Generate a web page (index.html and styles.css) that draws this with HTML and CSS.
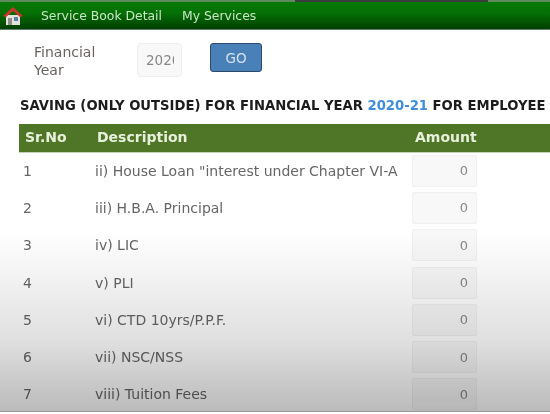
FILE: index.html
```html
<!DOCTYPE html>
<html>
  <head>
    <meta name="viewport" content="width=device-width, initial-scale=1" />
    <title>Saving (Only Outside)</title>
    <link rel="stylesheet" href="styles.css">
  </head>

  <body>
    <div class="top-strip"><div class="top-strip-dark"></div></div>
    <div class="nav">
      <a class="nav-home" href="#">
        <svg width="22" height="20" viewBox="0 0 22 20">
          <rect x="4" y="9" width="14" height="10" fill="#e4e2dc" />
          <rect x="12" y="11" width="4" height="4" fill="#5a7fa8" />
          <rect x="6" y="12" width="4" height="7" fill="#8f8f88" />
          <path d="M1 10 L11 1 L21 10 L18 11 L11 5 L4 11 Z" fill="#c9372c" />
        </svg>
      </a>
      <a class="nav-link" href="#">Service Book Detail</a>
      <a class="nav-link" href="#">My Services</a>
    </div>

    <div class="filter">
      <label class="filter-label">Financial Year</label>
      <input class="filter-input" type="text" value="2020-21" readonly />
      <button class="go-button">GO</button>
    </div>

    <h4 class="title">SAVING (ONLY OUTSIDE) FOR FINANCIAL YEAR <span class="year">2020-21</span> FOR EMPLOYEE</h4>

    <table class="saving-table">
      <thead>
        <tr>
          <th class="col-no">Sr.No</th>
          <th class="col-desc">Description</th>
          <th class="col-amount">Amount</th>
          <th></th>
        </tr>
      </thead>
      <tbody>
        <tr><td>1</td><td>ii) House Loan "interest under Chapter VI-A</td><td><input class="amount" value="0" readonly /></td><td></td></tr>
        <tr><td>2</td><td>iii) H.B.A. Principal</td><td><input class="amount" value="0" readonly /></td><td></td></tr>
        <tr><td>3</td><td>iv) LIC</td><td><input class="amount" value="0" readonly /></td><td></td></tr>
        <tr><td>4</td><td>v) PLI</td><td><input class="amount" value="0" readonly /></td><td></td></tr>
        <tr><td>5</td><td>vi) CTD 10yrs/P.P.F.</td><td><input class="amount" value="0" readonly /></td><td></td></tr>
        <tr><td>6</td><td>vii) NSC/NSS</td><td><input class="amount" value="0" readonly /></td><td></td></tr>
        <tr><td>7</td><td>viii) Tuition Fees</td><td><input class="amount" value="0" readonly /></td><td></td></tr>
      </tbody>
    </table>

    <!-- Grey fade over the bottom of the page -->
    <div class="fade"></div>
  </body>
</html>
```

FILE: styles.css
```css
* {
  box-sizing: border-box;
}

html,
body {
  height: 414px;
  overflow: hidden;
}

body {
  margin: 0;
  background-color: white;
  font-family: "DejaVu Sans", sans-serif;
  font-size: 14px;
  color: #555;
}

.top-strip {
  height: 2px;
  background-color: #5f8a5f;
  padding-left: 295px;
}

.top-strip-dark {
  width: 193px;
  height: 2px;
  background-color: #3c3c3c;
}

.nav {
  display: flex;
  align-items: center;
  height: 28px;
  background: linear-gradient(#067a06, #057005 40%, #013f01);
  border-bottom: 1px solid #5d8070;
}

.nav-home {
  display: flex;
  width: 41px;
  padding-left: 2px;
}

.nav-link {
  margin-right: 20px;
  color: #c8e6c4;
  font-size: 12.4px;
  text-decoration: none;
}

.filter {
  display: flex;
  align-items: flex-start;
  height: 62px;
  padding: 0 0 0 34px;
  padding-top: 13px;
}

.filter-label {
  width: 103px;
  padding-right: 35px;
  font-size: 14px;
  line-height: 18px;
  color: #6b6260;
}

.filter-input {
  width: 45px;
  height: 34px;
  margin-right: 28px;
  padding: 0 7px 0 8px;
  border: 1px solid #eee;
  border-radius: 4px;
  background-color: #f8f8f8;
  font-family: inherit;
  font-size: 13.5px;
  color: #888;
}

.go-button {
  width: 52px;
  height: 29px;
  border: 1px solid #2e4a6b;
  border-radius: 3px;
  background-color: #4a80b8;
  font-family: inherit;
  font-size: 13.5px;
  color: #d5e2ee;
}

.title {
  margin: 4px 0 0 20px;
  height: 19px;
  line-height: 19px;
  font-size: 13.2px;
  font-weight: bold;
  white-space: nowrap;
  color: #1c1c1c;
}

.year {
  color: #3f8edc;
}

.saving-table {
  width: 531px;
  margin: 9px 0 0 19px;
  border-collapse: collapse;
  table-layout: fixed;
}

.saving-table th {
  height: 28px;
  padding: 0 0 1px 6px;
  background-color: #4f7527;
  border-bottom: 1px solid #c8d4b8;
  color: #e8f0dc;
  font-size: 14px;
  text-align: left;
}

.saving-table td {
  height: 37.3px;
  padding: 0 0 0 4px;
  font-size: 14px;
  white-space: nowrap;
  color: #666;
}

.col-no {
  width: 72px;
}

.col-desc {
  width: 317px;
}

.col-amount {
  width: 76px;
}

.saving-table th.col-amount {
  padding-left: 7px;
}

.saving-table td:nth-child(3) {
  padding-left: 4px;
}

.amount {
  display: block;
  width: 65px;
  height: 32px;
  padding: 0 8px;
  border: 1px solid #f0f0f0;
  border-radius: 2px;
  background-color: #f8f8f8;
  font-family: inherit;
  font-size: 13px;
  color: #888;
  text-align: right;
}

.fade {
  position: absolute;
  top: 232px;
  left: 0;
  width: 550px;
  height: 180px;
  background: linear-gradient(#fff, #f5f5f5 20%, #e0e0e0 60%, #bbb);
  border-bottom: 1px solid #999;
  mix-blend-mode: multiply;
  pointer-events: none;
}
```
